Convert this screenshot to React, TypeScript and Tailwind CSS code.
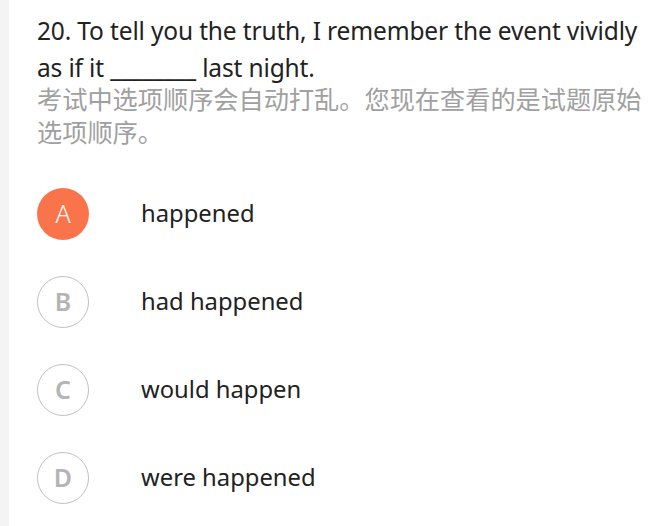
const options = [
  { key: "A", text: "happened", selected: true },
  { key: "B", text: "had happened" },
  { key: "C", text: "would happen" },
  { key: "D", text: "were happened" },
];

export default function App() {
  return (
    <div className="flex h-[526px] w-[649px] bg-white font-['Noto_Sans','Noto_Sans_CJK_SC',sans-serif]">
      <div className="w-[9px] shrink-0 bg-[#f4f4f4]" />
      <div className="flex-1 pl-[28px] pt-[12px]">
        <p className="text-[24.5px] leading-[37px] text-[#222] tracking-[-0.15px]">
          20. To tell you the truth, I remember the event vividly as if it ________ last night.
        </p>
        <p className="mt-[-3px] text-[25.2px] leading-[33px] text-[#a0a0a0]">
          考试中选项顺序会自动打乱。您现在查看的是试题原始选项顺序。
        </p>
        <div className="mt-[39px] flex flex-col gap-[36px]">
          {options.map((o) => (
            <div key={o.key} className="flex items-center">
              {o.selected ? (
                <div className="flex h-[52px] w-[52px] items-center justify-center rounded-full bg-[#fa744b] text-[25px] font-light text-white">
                  {o.key}
                </div>
              ) : (
                <div className="flex h-[52px] w-[52px] items-center justify-center rounded-full border-[1.5px] border-[#c2c2c2] text-[25px] font-semibold text-[#b4b4b4]">
                  {o.key}
                </div>
              )}
              <span className="ml-[52px] text-[23.8px] text-[#222]">{o.text}</span>
            </div>
          ))}
        </div>
      </div>
    </div>
  );
}
